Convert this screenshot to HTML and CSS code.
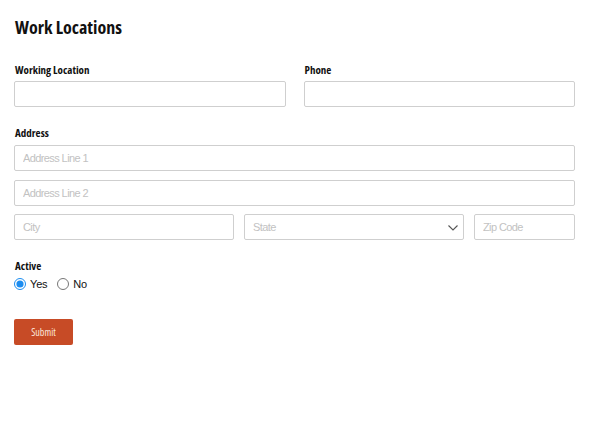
FILE: index.html
```html
<!DOCTYPE html>
<html lang="en">
<head>
<meta charset="UTF-8">
<meta name="viewport" content="width=device-width, initial-scale=1.0">
<title>Work Locations</title>
<link rel="stylesheet" href="styles.css">
</head>
<body>

<form class="location-form">
    <h1 class="page-title">Work Locations</h1>

    <!-- Location and phone side by side -->
    <div class="row two-col">
        <div class="field">
            <label class="field-label" for="location">Working Location</label>
            <input type="text" id="location" class="text-input">
        </div>
        <div class="field">
            <label class="field-label" for="phone">Phone</label>
            <input type="text" id="phone" class="text-input">
        </div>
    </div>

    <!-- Address block -->
    <div class="field address">
        <label class="field-label" for="line1">Address</label>
        <div class="address-lines">
            <input type="text" id="line1" class="text-input" placeholder="Address Line 1">
            <input type="text" class="text-input" placeholder="Address Line 2">
            <div class="city-row">
                <input type="text" class="text-input" placeholder="City">
                <div class="select-wrap">
                    <select class="text-input select-input">
                        <option>State</option>
                    </select>
                    <svg class="chevron" width="10" height="6" viewBox="0 0 10 6">
                        <path d="M0.5 0.5 L5 5 L9.5 0.5" fill="none" stroke="#555" stroke-width="1.1"/>
                    </svg>
                </div>
                <input type="text" class="text-input" placeholder="Zip Code">
            </div>
        </div>
    </div>

    <!-- Active toggle -->
    <div class="field active">
        <span class="field-label">Active</span>
        <div class="radio-group">
            <label class="radio"><input type="radio" name="active" checked> Yes</label>
            <label class="radio"><input type="radio" name="active"> No</label>
        </div>
    </div>

    <button type="button" class="submit-btn">Submit</button>
</form>

</body>
</html>
```

FILE: styles.css
```css
html, body {
    margin: 0;
    background: #ffffff;
}

body {
    font-family: "Liberation Sans", Arial, sans-serif;
    color: #222;
}

.location-form {
    padding: 14px 15px 20px 14px;
}

/* condensed bold headings */
.page-title,
.field-label,
.submit-btn {
    font-family: "Open Sans", "DejaVu Sans", sans-serif;
    font-stretch: 75%;
}

.page-title {
    margin: 0 0 24px 1px;
    font-size: 18px;
    font-weight: 700;
    line-height: 26px;
    color: #111;
}

.row.two-col {
    display: grid;
    grid-template-columns: 1fr 1fr;
    gap: 18px;
}

.field {
    display: flex;
    flex-direction: column;
}

.field-label {
    font-size: 11px;
    font-weight: 700;
    line-height: 12px;
    margin: 0 0 5px 1px;
    color: #111;
}

.text-input {
    box-sizing: border-box;
    height: 26px;
    width: 100%;
    border: 1px solid #cfcfcf;
    border-radius: 2px;
    padding: 0 8px;
    font-family: "Liberation Sans", Arial, sans-serif;
    font-size: 11px;
    letter-spacing: -0.6px;
    color: #333;
    background: #fff;
    outline: none;
}

.text-input::placeholder {
    color: #c2c2c2;
}

.address {
    margin-top: 20px;
}

.address .field-label {
    margin-bottom: 6px;
}

.address-lines {
    display: flex;
    flex-direction: column;
    gap: 9px;
}

.city-row {
    display: grid;
    grid-template-columns: 220px 220px 1fr;
    gap: 10px;
    margin-top: -1px;
}

.select-wrap {
    position: relative;
}

.select-input {
    appearance: none;
    -webkit-appearance: none;
    color: #c2c2c2;
}

.chevron {
    position: absolute;
    right: 6px;
    top: 11px;
    pointer-events: none;
}

.active {
    margin-top: 20px;
}

.radio-group {
    display: flex;
    gap: 10px;
}

.radio {
    display: flex;
    align-items: center;
    gap: 4px;
    height: 14px;
    font-size: 11px;
    letter-spacing: -0.2px;
    color: #111;
}

.radio input {
    margin: 0;
    width: 12px;
    height: 12px;
    accent-color: #1a8cf0;
}

.submit-btn {
    margin-top: 28px;
    width: 59px;
    height: 26px;
    border: none;
    border-radius: 2px;
    background-color: #c74b26;
    color: #fbe5dc;
    font-size: 10px;
    cursor: pointer;
}
```
